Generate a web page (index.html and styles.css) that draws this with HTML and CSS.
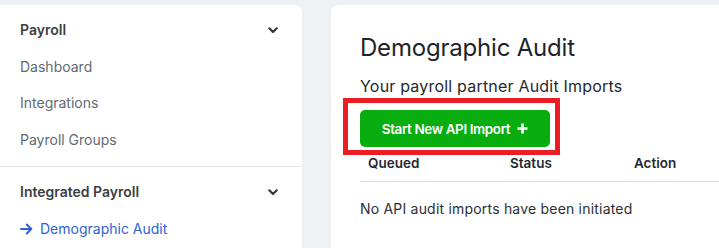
FILE: index.html
```html
<!DOCTYPE html>
<html lang="en">
<head>
<meta charset="utf-8">
<title>Demographic Audit</title>
<link rel="stylesheet" href="styles.css">
</head>
<body>
<div class="layout">
  <aside class="sidebar">
    <section class="nav-section">
      <div class="nav-head">
        <span>Payroll</span>
        <svg class="chev" viewBox="0 0 10 7" width="10" height="7"><path d="M1.3 1.3 L5 5 L8.7 1.3" fill="none" stroke="#33383d" stroke-width="2.2" stroke-linecap="round" stroke-linejoin="round"/></svg>
      </div>
      <a class="nav-item">Dashboard</a>
      <a class="nav-item">Integrations</a>
      <a class="nav-item">Payroll Groups</a>
    </section>
    <section class="nav-section">
      <div class="nav-head">
        <span>Integrated Payroll</span>
        <svg class="chev" viewBox="0 0 10 7" width="10" height="7"><path d="M1.3 1.3 L5 5 L8.7 1.3" fill="none" stroke="#33383d" stroke-width="2.2" stroke-linecap="round" stroke-linejoin="round"/></svg>
      </div>
      <a class="nav-item active">
        <svg class="arrow" viewBox="0 0 13 12" width="13" height="12"><path d="M1 6 H11.2 M6.8 1.5 L11.3 6 L6.8 10.5" fill="none" stroke="#2f62d4" stroke-width="2" stroke-linecap="round" stroke-linejoin="round"/></svg>
        <span>Demographic Audit</span>
      </a>
    </section>
  </aside>
  <main class="main">
    <h1 class="title">Demographic Audit</h1>
    <p class="subtitle">Your payroll partner Audit Imports</p>
    <div class="btn-wrap">
      <button class="btn">Start New API Import
        <svg class="plus" viewBox="0 0 11 11" width="11" height="11"><path d="M5.5 0.5 V10.5 M0.5 5.5 H10.5" stroke="#fff" stroke-width="2.6"/></svg>
      </button>
      <div class="highlight"></div>
    </div>
    <div class="table">
      <div class="thead">
        <div class="th">Queued</div>
        <div class="th">Status</div>
        <div class="th">Action</div>
      </div>
      <p class="empty">No API audit imports have been initiated</p>
    </div>
  </main>
</div>
</body>
</html>
```
FILE: styles.css
```css
* { box-sizing: border-box; }
html, body { margin: 0; padding: 0; }
body {
  background: #eef1f3;
  font-family: Inter, "Noto Sans", sans-serif;
  overflow: hidden;
  height: 248px;
}
.layout {
  display: flex;
  gap: 29px;
  padding-top: 5px;
  height: 248px;
}
.sidebar {
  width: 302px;
  flex: none;
  background: #fff;
  border-radius: 0 8px 0 0;
}
.nav-section {
  padding: 7px 0 8px;
}
.nav-section + .nav-section {
  border-top: 1px solid #e1e5e8;
  padding-bottom: 0;
}
.nav-head, .nav-item {
  display: flex;
  align-items: center;
  height: 36.5px;
  padding: 0 24px 0 20px;
  font-size: 14px;
  line-height: 20px;
}
.nav-head {
  justify-content: space-between;
  font-weight: 600;
  color: #3a3f44;
}
.chev { display: block; }
.nav-item {
  color: #5f6a74;
  text-decoration: none;
}
.nav-item.active {
  color: #2f62d4;
  gap: 7px;
}
.arrow { display: block; }
.main {
  flex: 1;
  background: #fff;
  border-radius: 8px 0 0 0;
  padding: 27px 0 0 29px;
}
.title {
  margin: 0;
  font-size: 24px;
  line-height: 32px;
  font-weight: 400;
  letter-spacing: -0.2px;
  color: #1f2328;
}
.subtitle {
  margin: 10px 0 0;
  font-size: 16px;
  line-height: 24px;
  letter-spacing: 0.2px;
  color: #25292e;
}
.btn-wrap {
  position: relative;
  width: 190px;
  margin-top: 12px;
}
.btn {
  display: flex;
  align-items: center;
  justify-content: center;
  gap: 7px;
  width: 190px;
  height: 37px;
  border: none;
  border-radius: 5px;
  background: #08ad10;
  color: #fff;
  font-family: Inter, "Noto Sans", sans-serif;
  font-size: 13.5px;
  font-weight: 600;
  letter-spacing: -0.4px;
  padding: 0;
}
.plus { display: block; }
.highlight {
  position: absolute;
  left: -17px;
  top: -12px;
  width: 217px;
  height: 57px;
  border: 5px solid #ec1c24;
  pointer-events: none;
}
.table { margin-top: 6px; }
.thead {
  display: grid;
  grid-template-columns: 142px 124px 1fr;
  padding-bottom: 8px;
  border-bottom: 1px solid #d8dde2;
}
.th {
  padding-left: 8px;
  font-size: 13.5px;
  line-height: 20px;
  font-weight: 600;
  color: #26292d;
}
.empty {
  margin: 17px 0 0;
  font-size: 14px;
  line-height: 20px;
  letter-spacing: 0.2px;
  color: #2b2f33;
}
```
